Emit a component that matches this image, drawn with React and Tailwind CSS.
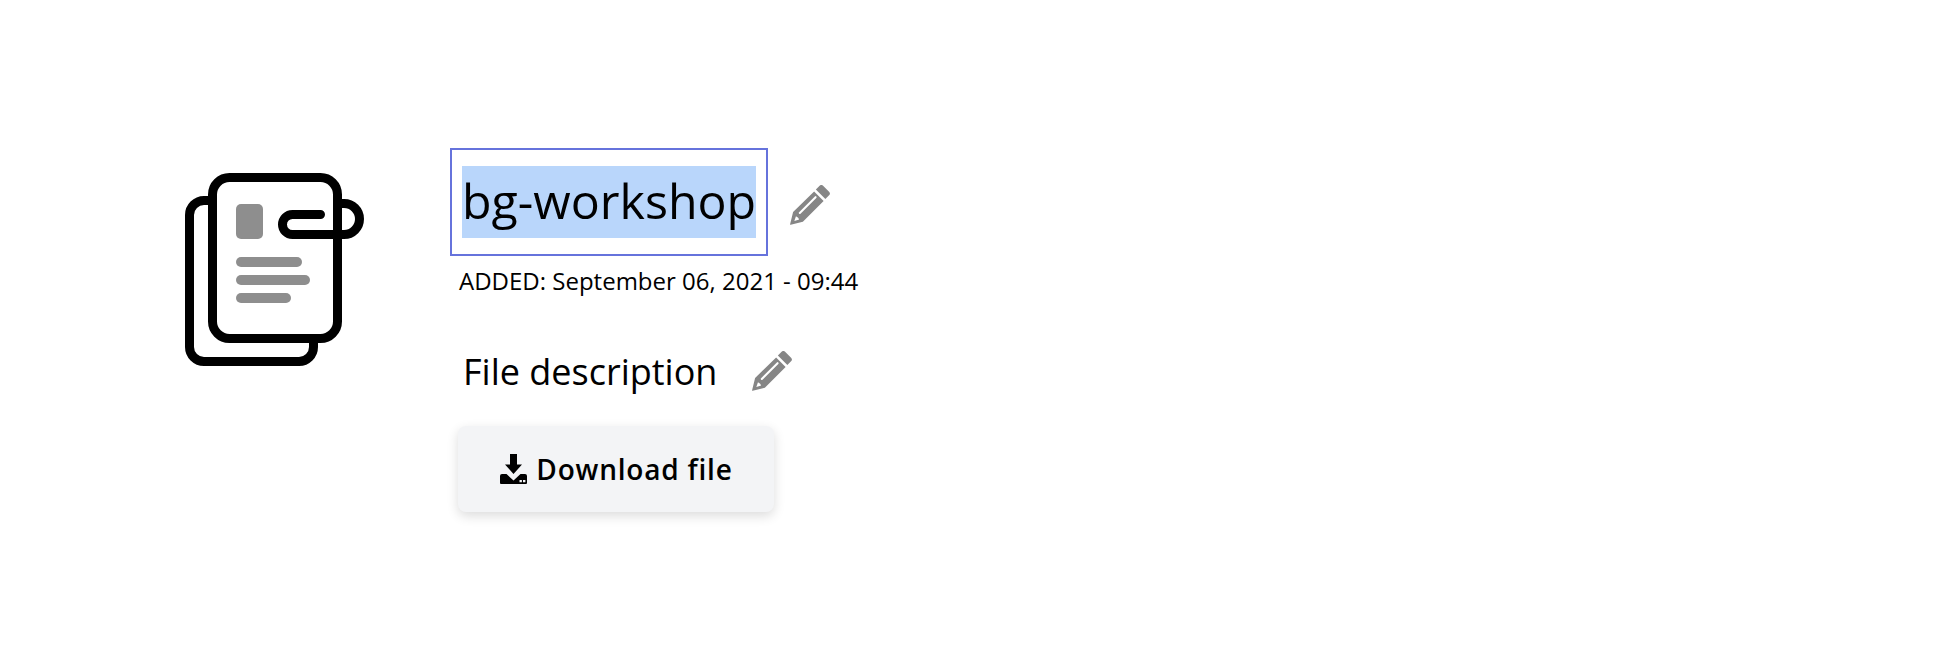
const F = '"Open Sans", sans-serif';

function Pencil({ className }) {
  return (
    <svg className={className} viewBox="0.5 2.8 38.8 38.8" fill="#868686">
      <path d="M29.2 3.6a2.4 2.4 0 0 1 3.4 0l5.8 5.800a2.4 2.4 0 0 1 0 3.4l-3.6 3.6-9.2-9.2z" />
      <path fillRule="evenodd" d="M23.9 9.2l9.2 9.2L13 38.5 1.2 41.4a.5.5 0 0 1-.6-.6L3.5 29zM26 13.9a1 1 0 0 0-1.4 0L9.3 29.2a1 1 0 0 0 0 1.4 1 1 0 0 0 1.4 0L26 15.3a1 1 0 0 0 0-1.4zM6.3 33.2l-1.6 4.6 4.7-1.5-1-1.7z" />
    </svg>
  );
}

function FileIcon() {
  return (
    <svg className="w-[186px] h-[200px] shrink-0" viewBox="0 0 186 200" fill="none">
      <path d="M25 27.500H19A14.500 14.500 0 0 0 4.500 42V174A14.500 14.500 0 0 0 19 188.500H114A14.500 14.500 0 0 0 128.500 174V166" stroke="#000" strokeWidth="9" />
      <rect x="27.500" y="4.500" width="125" height="161" rx="17" stroke="#000" strokeWidth="9" />
      <rect x="51" y="31" width="27" height="35" rx="5" fill="#8e8e8e" />
      <rect x="51" y="84" width="66" height="10" rx="5" fill="#8e8e8e" />
      <rect x="51" y="102" width="74" height="10" rx="5" fill="#8e8e8e" />
      <rect x="51" y="120" width="55" height="10" rx="5" fill="#8e8e8e" />
      <path d="M135.500 41.500H107.500A10 10 0 0 0 107.500 61.500H159A15.500 15.500 0 0 0 159 30.500H153" stroke="#000" strokeWidth="9" strokeLinecap="round" />
    </svg>
  );
}

function DownloadIcon() {
  return (
    <svg className="w-[29px] h-[30px] shrink-0" viewBox="0 0 27 30" fill="#000">
      <path d="M10 0h7v10.500h5L13.500 20 5 10.500h5z" />
      <path fillRule="evenodd" d="M0 22a2 2 0 0 1 2-2h4.500l7 6.500 7-6.500H25a2 2 0 0 1 2 2v7a1 1 0 0 1-1 1H1a1 1 0 0 1-1-1zM19.500 26h2.400v2.200h-2.400zM23 26h2.400v2.200H23z" />
    </svg>
  );
}

export default function App() {
  return (
    <div className="flex w-[1956px] h-[666px] bg-white text-black overflow-hidden pl-[185px] pt-[148px]" style={{ fontFamily: F }}>
      <div className="pt-[25px] w-[265px] shrink-0">
        <FileIcon />
      </div>
      <div className="flex flex-col items-start">
        <div className="flex items-center">
          <div className="border-2 border-[#6673dc] w-[318px] h-[108px] flex items-center pl-[10px]">
            <span className="bg-[#b9d6fb] text-[48.300px] leading-[68px] h-[72px] block whitespace-nowrap">bg-workshop</span>
          </div>
          <Pencil className="w-[40px] h-[40px] ml-[22px] mt-[6px]" />
        </div>
        <div className="text-[24px] leading-[32px] mt-[9px] ml-[9px] whitespace-nowrap">ADDED: September 06, 2021 - 09:44</div>
        <div className="flex items-center mt-[50px] ml-[13px]">
          <span className="text-[36px] leading-[50px] whitespace-nowrap">File description</span>
          <Pencil className="w-[40px] h-[40px] ml-[35px] -mt-[2px]" />
        </div>
        <button className="flex items-center justify-center w-[316px] h-[86px] mt-[29px] ml-[8px] rounded-[8px] bg-[#f3f4f6] shadow-[0_4px_12px_rgba(0,0,0,0.14)] font-semibold text-[28px] tracking-[0.8px] gap-[8px] pb-[1px]">
          <DownloadIcon />
          <span className="whitespace-nowrap">Download file</span>
        </button>
      </div>
    </div>
  );
}
